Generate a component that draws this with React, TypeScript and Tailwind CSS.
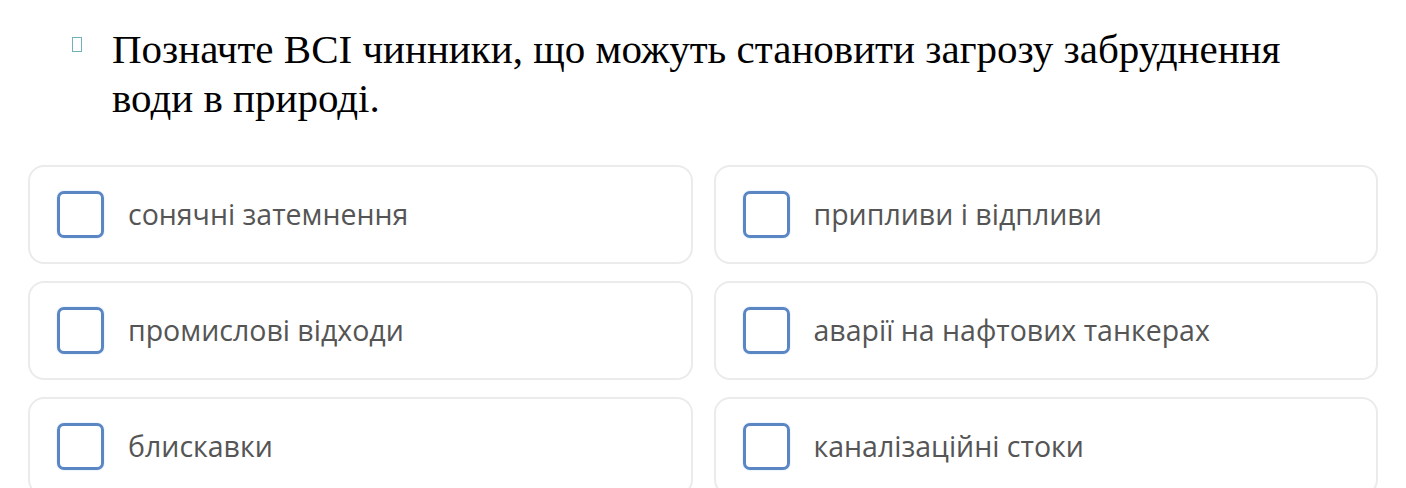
const options = [
  "сонячні затемнення",
  "припливи і відпливи",
  "промислові відходи",
  "аварії на нафтових танкерах",
  "блискавки",
  "каналізаційні стоки",
];

const OptionCard = ({ label }: { label: string }) => (
  <label className="flex h-[99px] items-center rounded-[16px] border-2 border-[#ebebeb] bg-white pl-[27px]">
    <span className="h-[47px] w-[47px] shrink-0 rounded-[7px] border-[3px] border-[#5a86c4] bg-white shadow-[0_0_2px_#c7dcf5]" />
    <span className="ml-[24px] text-[28.5px] text-[#555] font-['Open_Sans',sans-serif]">
      {label}
    </span>
  </label>
);

export default function App() {
  return (
    <div className="h-[488px] w-[1406px] overflow-hidden bg-white">
      <div className="flex h-[165px] pl-[72px] pt-[25px]">
        <span className="mt-[12px] h-[15px] w-[10px] shrink-0 border border-[#6fb3b8]" />
        <p className="ml-[30px] text-[41px] leading-[49px] text-black font-['Liberation_Serif',serif]">
          Позначте ВСІ чинники, що можуть становити загрозу забруднення
          <br />
          води в природі.
        </p>
      </div>
      <div className="grid grid-cols-2 gap-x-[21px] gap-y-[17px] px-[28px]">
        {options.map((o) => (
          <OptionCard key={o} label={o} />
        ))}
      </div>
    </div>
  );
}
